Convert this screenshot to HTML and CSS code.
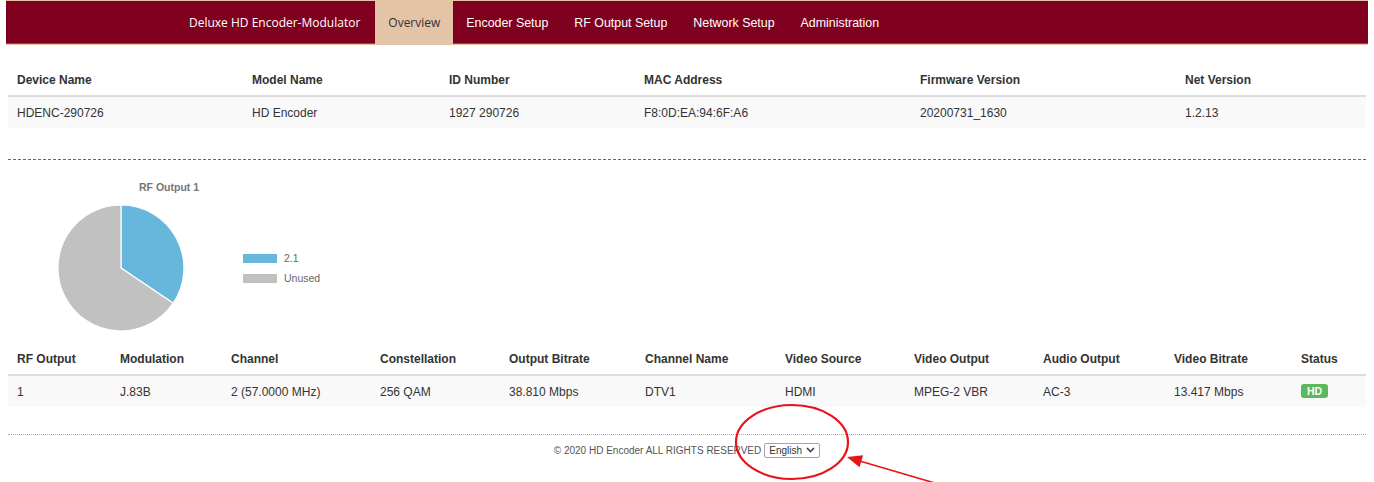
FILE: index.html
```html
<!DOCTYPE html>
<html lang="en">
<head>
<meta charset="utf-8">
<title>Overview - Deluxe HD Encoder-Modulator</title>
<link rel="stylesheet" href="styles.css">
</head>
<body>
<nav class="topbar">
  <span class="brand">Deluxe HD Encoder-Modulator</span>
  <ul class="menu">
    <li class="menu-item active"><a href="#">Overview</a></li>
    <li class="menu-item"><a href="#">Encoder Setup</a></li>
    <li class="menu-item"><a href="#">RF Output Setup</a></li>
    <li class="menu-item"><a href="#">Network Setup</a></li>
    <li class="menu-item"><a href="#">Administration</a></li>
  </ul>
</nav>

<main class="page">
  <table class="grid info">
    <thead>
      <tr>
        <th>Device Name</th>
        <th>Model Name</th>
        <th>ID Number</th>
        <th>MAC Address</th>
        <th>Firmware Version</th>
        <th>Net Version</th>
      </tr>
    </thead>
    <tbody>
      <tr>
        <td>HDENC-290726</td>
        <td>HD Encoder</td>
        <td>1927 290726</td>
        <td>F8:0D:EA:94:6F:A6</td>
        <td>20200731_1630</td>
        <td>1.2.13</td>
      </tr>
    </tbody>
  </table>

  <hr class="divider">

  <section class="chart">
    <svg class="pie-chart" width="400" height="181" viewBox="0 0 400 181">
      <text class="chart-title" x="131" y="31">RF Output 1</text>
      <path class="slice used" d="M113,108 L113,45 A63,63 0 0,1 165.2,143.2 Z"/>
      <path class="slice unused" d="M113,108 L165.2,143.2 A63,63 0 1,1 113,45 Z"/>
      <rect class="used" x="235" y="94" width="34" height="9"/>
      <text class="legend-label" x="276" y="102">2.1</text>
      <rect class="unused" x="235" y="114" width="34" height="9"/>
      <text class="legend-label" x="276" y="122">Unused</text>
    </svg>
  </section>

  <table class="grid outputs">
    <thead>
      <tr>
        <th>RF Output</th>
        <th>Modulation</th>
        <th>Channel</th>
        <th>Constellation</th>
        <th>Output Bitrate</th>
        <th>Channel Name</th>
        <th>Video Source</th>
        <th>Video Output</th>
        <th>Audio Output</th>
        <th>Video Bitrate</th>
        <th>Status</th>
      </tr>
    </thead>
    <tbody>
      <tr>
        <td>1</td>
        <td>J.83B</td>
        <td>2 (57.0000 MHz)</td>
        <td>256 QAM</td>
        <td>38.810 Mbps</td>
        <td>DTV1</td>
        <td>HDMI</td>
        <td>MPEG-2 VBR</td>
        <td>AC-3</td>
        <td>13.417 Mbps</td>
        <td><span class="badge">HD</span></td>
      </tr>
    </tbody>
  </table>

  <footer class="footer">
    <span class="copyright">&copy; 2020 HD Encoder ALL RIGHTS RESERVED</span>
    <span class="lang-select">
      <select class="lang">
        <option>English</option>
      </select>
      <svg class="chevron" width="9" height="6" viewBox="0 0 9 6"><path d="M1,1 L4.5,4.5 L8,1" fill="none" stroke="#444" stroke-width="1.7"/></svg>
    </span>
  </footer>
</main>

<svg class="markup" width="1374" height="482" viewBox="0 0 1374 482">
  <ellipse cx="792" cy="442" rx="56" ry="37" fill="none" stroke="#e8121b" stroke-width="2.2"/>
  <line x1="945" y1="486" x2="858" y2="460.5" stroke="#e8121b" stroke-width="1.6"/>
  <polygon points="847,457 863.1,455.2 859.5,467.3" fill="#e8121b"/>
</svg>
</body>
</html>
```

FILE: styles.css
```css
html, body {
  margin: 0;
  padding: 0;
  background: #fff;
}

body {
  font-family: "Liberation Sans", Arial, sans-serif;
  font-size: 12px;
  color: #333;
  position: relative;
  min-height: 482px;
}

/* Top navigation bar */
.topbar {
  display: flex;
  align-items: stretch;
  margin: 0 6px;
  height: 43px;
  background: #800020;
  border-top: 1px solid #e4c4a6;
  border-bottom: 1px solid #e4c4a6;
  box-shadow: inset 0 -1px 0 #a83a52;
  padding-left: 170px;
}

.brand {
  display: flex;
  align-items: center;
  padding: 0 15px 0 13px;
  font-family: "Open Sans", "Noto Sans", sans-serif;
  font-size: 12px;
  color: #fff;
}

.menu {
  display: flex;
  list-style: none;
  margin: 0;
  padding: 0;
}

.menu-item a {
  display: flex;
  align-items: center;
  height: 100%;
  padding: 0 13px;
  color: #fff;
  text-decoration: none;
  font-size: 12.4px;
}

.menu-item.active a {
  background: #e4c4a6;
  color: #333;
  font-family: "Open Sans", "Noto Sans", sans-serif;
  font-size: 12px;
}

/* Content */
.page {
  margin: 0 8px;
}

.grid {
  width: 100%;
  border-collapse: collapse;
  table-layout: fixed;
}

.grid th,
.grid td {
  text-align: left;
  line-height: 17px;
  padding: 8px 9px 6px;
  white-space: nowrap;
}

.grid th {
  font-weight: bold;
  padding-top: 10px;
  padding-bottom: 6px;
  border-bottom: 2px solid #ddd;
}

.grid tbody tr {
  background: #f9f9f9;
}

.info {
  margin-top: 17px;
}

.info th:nth-child(1) { width: 217px; }
.info th:nth-child(2) { width: 179px; }
.info th:nth-child(3) { width: 177px; }
.info th:nth-child(4) { width: 258px; }
.info th:nth-child(5) { width: 247px; }
.info th:nth-child(6) { width: 172px; }

.divider {
  margin: 31px 0 0;
  border: 0;
  border-top: 1px dashed #666;
  height: 0;
}

.chart {
  height: 181px;
}

.pie-chart {
  display: block;
}

.chart-title {
  font-family: "Liberation Sans", Arial, sans-serif;
  font-size: 10.5px;
  font-weight: bold;
  fill: #757575;
}

.legend-label {
  font-family: "Liberation Sans", Arial, sans-serif;
  font-size: 10.5px;
  fill: #666;
}

.slice {
  stroke: #fff;
  stroke-width: 1.2;
}

.used { fill: #67b7dc; }
.unused { fill: #c1c1c1; }

.outputs th:nth-child(1) { width: 85px; }
.outputs th:nth-child(2) { width: 93px; }
.outputs th:nth-child(3) { width: 131px; }
.outputs th:nth-child(4) { width: 111px; }
.outputs th:nth-child(5) { width: 118px; }
.outputs th:nth-child(6) { width: 122px; }
.outputs th:nth-child(7) { width: 111px; }
.outputs th:nth-child(8) { width: 111px; }
.outputs th:nth-child(9) { width: 113px; }
.outputs th:nth-child(10) { width: 109px; }
.outputs th:nth-child(11) { width: 56px; }

.badge {
  display: inline-block;
  background: #5cb85c;
  color: #fff;
  font-weight: bold;
  font-size: 10.5px;
  line-height: 14px;
  padding: 0 6px;
  border-radius: 3px;
  vertical-align: 1px;
}

/* Footer */
.footer {
  margin-top: 27px;
  border-top: 1px dotted #aaa;
  padding-top: 8px;
  display: flex;
  justify-content: center;
  align-items: center;
  font-size: 10px;
  color: #555;
}

.copyright {
  margin-right: 3px;
}

.lang-select {
  position: relative;
  display: inline-block;
}

.lang {
  appearance: none;
  -webkit-appearance: none;
  width: 56px;
  height: 15px;
  margin: 0;
  padding: 0 0 0 4px;
  border: 1px solid #a6a6a6;
  border-radius: 2px;
  background: #fff;
  font-family: "Liberation Sans", Arial, sans-serif;
  font-size: 10px;
  color: #333;
  display: block;
}

.chevron {
  position: absolute;
  right: 5px;
  top: 4px;
  pointer-events: none;
}

/* Annotation overlay */
.markup {
  position: absolute;
  left: 0;
  top: 0;
  pointer-events: none;
}
```
